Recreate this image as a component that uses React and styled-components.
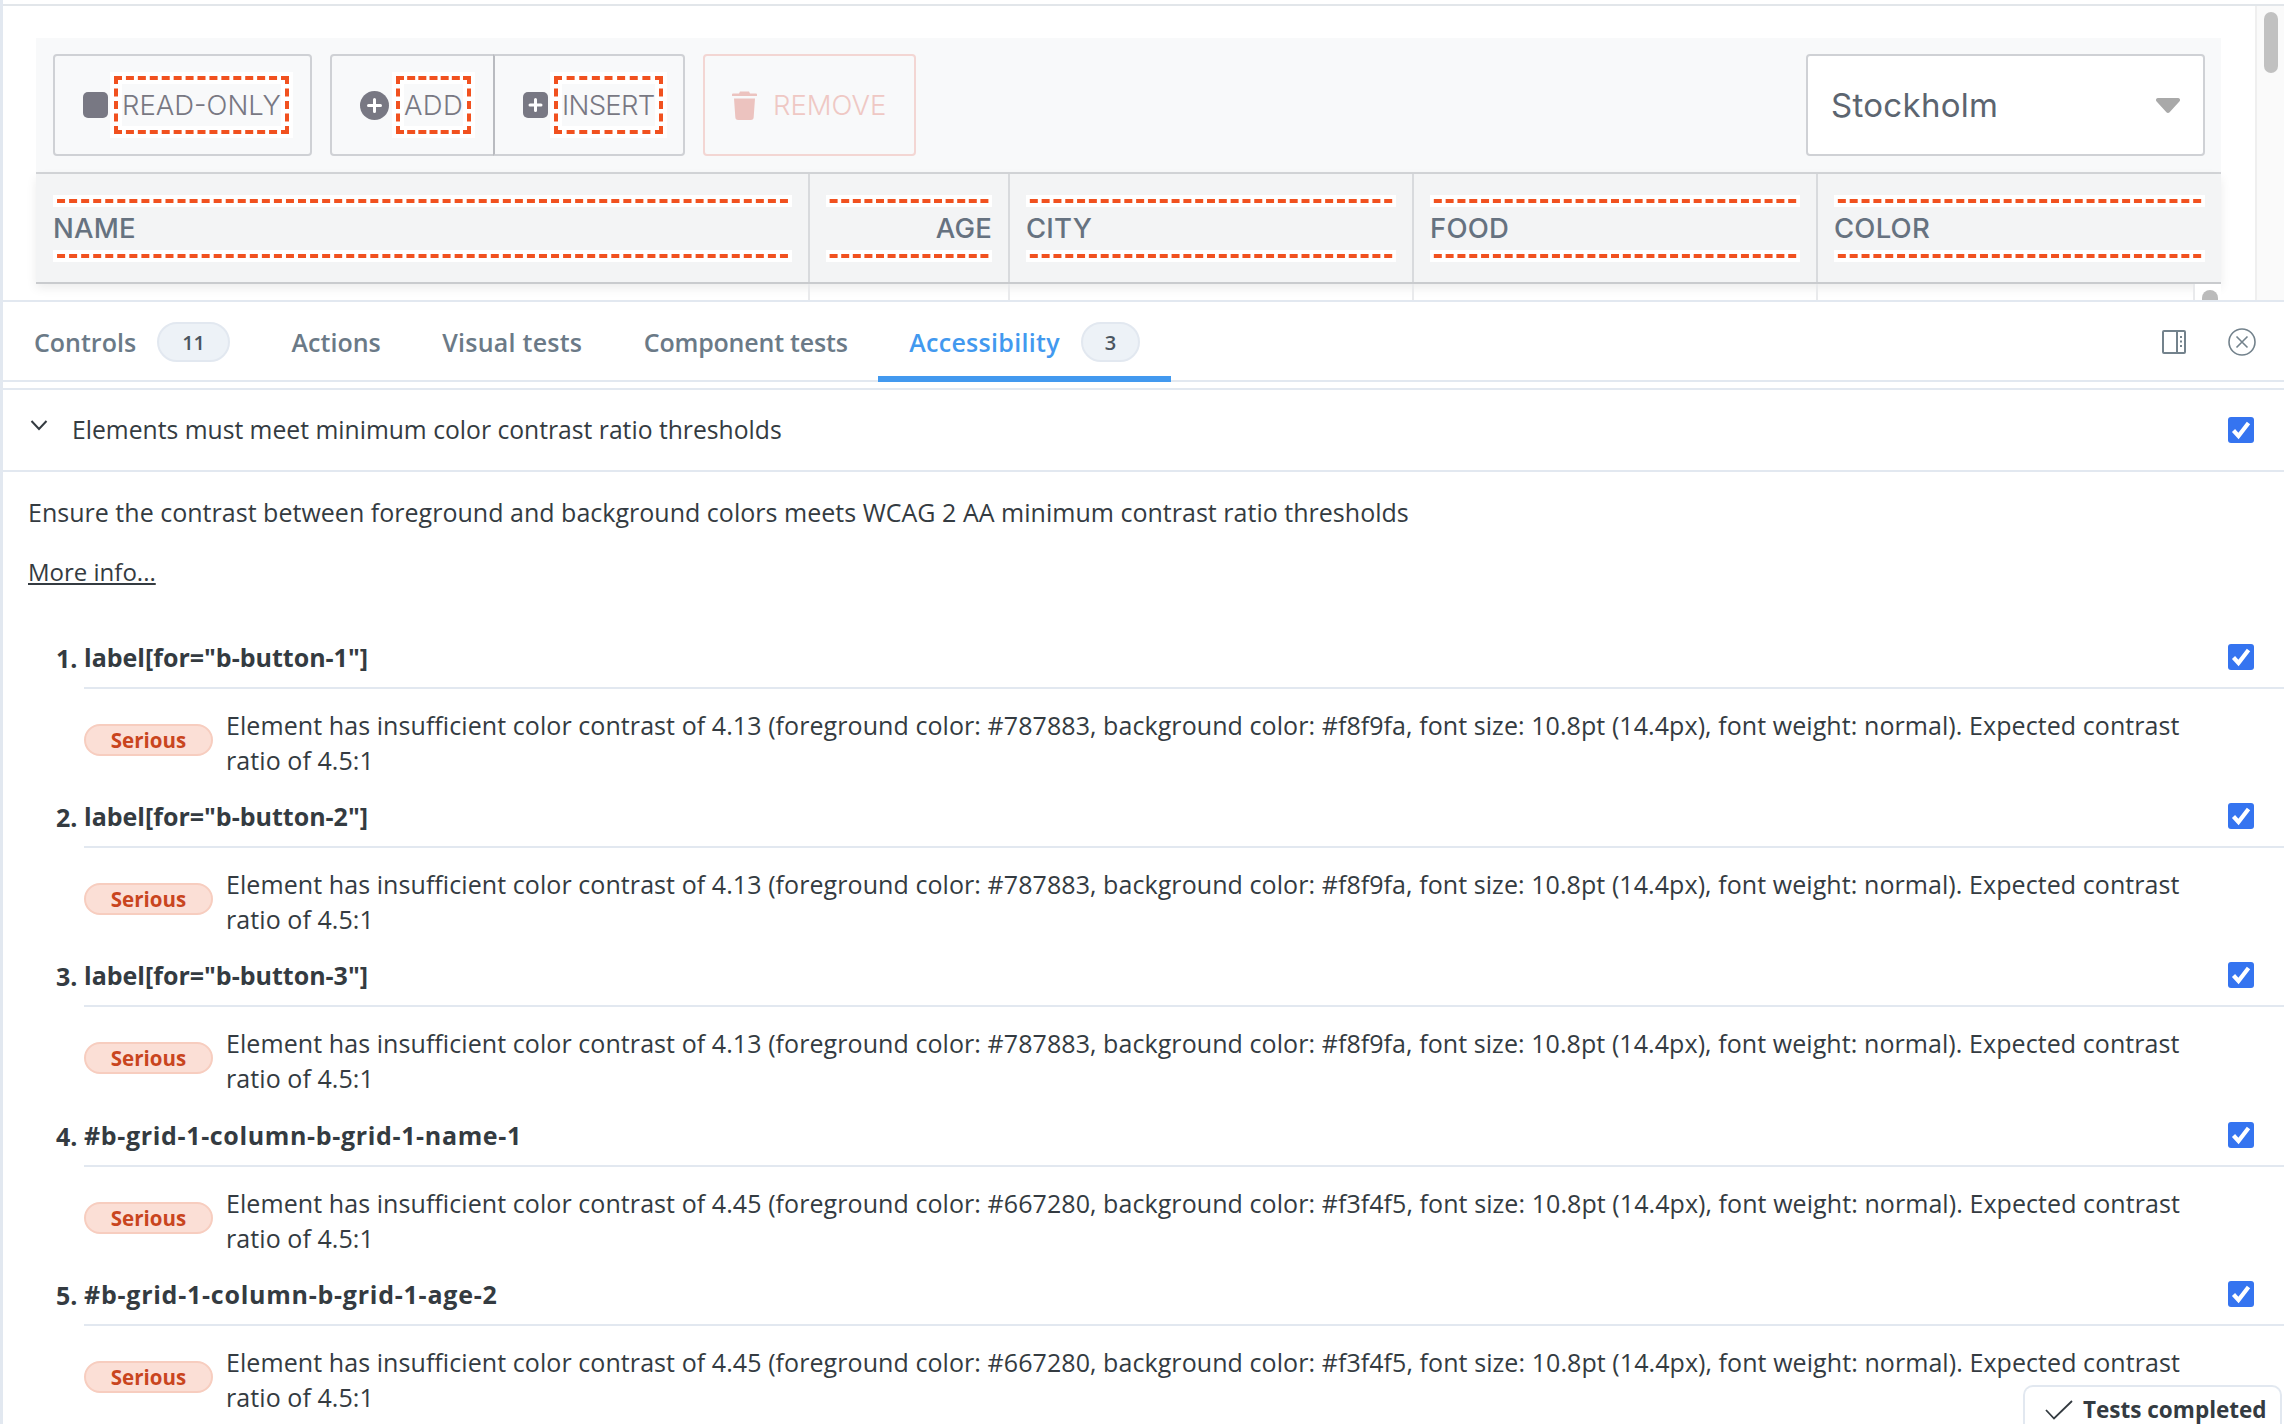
import React from 'react';
import styled, { createGlobalStyle } from 'styled-components';

const GlobalStyle = createGlobalStyle`
  html, body {
    margin: 0;
    padding: 0;
    background: #fff;
    overflow: hidden;
  }
  * {
    box-sizing: border-box;
  }
`;

const BODY_FONT = '"Open Sans", "Noto Sans", sans-serif';
const UI_FONT = 'Inter, "Open Sans", sans-serif';
const HIGHLIGHT = `
  outline: 4px dashed #f1511f;
  outline-offset: 4px;
  box-shadow: 0 0 0 12px #fff;
`;

const Frame = styled.div`
  position: relative;
  display: flex;
  flex-direction: column;
  width: 2284px;
  height: 1424px;
  padding-top: 4px;
  overflow: hidden;
  border-left: 3px solid #e2e8f0;
  font-family: ${BODY_FONT};
  color: #343b41;
`;

const Preview = styled.div`
  display: flex;
  flex: 0 0 296px;
  border-top: 2px solid #e2e6ea;
  overflow: hidden;
`;

const Canvas = styled.div`
  flex: 1;
  min-width: 0;
  padding: 32px 34px 0 33px;
`;

const PageScrollbar = styled.div`
  flex: 0 0 29px;
  padding: 6px 6px 0 7px;
  background: #fafafa;
  border-left: 2px solid #efefef;
`;

const PageThumb = styled.div`
  height: 61px;
  background: #c1c1c1;
  border-radius: 8px;
`;

const Toolbar = styled.div`
  display: flex;
  align-items: flex-start;
  gap: 18px;
  height: 136px;
  padding: 16px 16px 0 17px;
  background: #f8f9fa;
  border-bottom: 2px solid #d3d5d8;
`;

const ButtonGroup = styled.div`
  display: flex;
`;

const ToolButton = styled.div`
  display: flex;
  align-items: center;
  gap: ${(props) => props.gap || 14}px;
  width: ${(props) => props.width}px;
  height: 102px;
  padding-left: ${(props) => props.pad}px;
  margin-left: ${(props) => (props.joined ? '-2px' : '0')};
  border: 2px solid ${(props) => (props.danger ? '#f3d6d3' : '#cfd1d5')};
  border-left-color: ${(props) => {
    if (props.danger) return '#f3d6d3';
    return props.joined ? '#b9bbc0' : '#cfd1d5';
  }};
  border-radius: ${(props) => props.radius || '4px'};
  flex: none;
`;

const ButtonLabel = styled.span`
  display: block;
  height: 42px;
  font-family: ${UI_FONT};
  font-size: 27.5px;
  font-weight: 300;
  line-height: 42px;
  letter-spacing: ${(props) => props.spacing || 0}px;
  white-space: nowrap;
  color: ${(props) => (props.danger ? '#efc8c4' : '#787883')};
  ${(props) => !props.danger && HIGHLIGHT}
`;

const SquareIcon = styled.span`
  display: block;
  flex: none;
  width: 25px;
  height: 26px;
  background: #787883;
  border-radius: 5px;
`;

const IconSvg = styled.svg`
  display: block;
  flex: none;
`;

const CitySelect = styled.div`
  display: flex;
  align-items: center;
  justify-content: space-between;
  width: 399px;
  height: 102px;
  margin-left: auto;
  padding: 0 23px 0 23px;
  background: #fff;
  border: 2px solid #cfd1d5;
  border-radius: 4px;
  font-family: ${UI_FONT};
  font-size: 33px;
  font-weight: 400;
  letter-spacing: 0.3px;
  color: #5c6570;
`;

const GRID_COLUMNS = '772px 200px 404px 404px 405px';

const HeaderRow = styled.div`
  position: relative;
  display: grid;
  grid-template-columns: ${GRID_COLUMNS};
  height: 110px;
  background: #f3f4f5;
  border-bottom: 2px solid #c9cbce;
  box-shadow: 0 4px 10px rgba(0, 0, 0, 0.08);
`;

const HeaderCell = styled.div`
  display: flex;
  align-items: center;
  min-width: 0;
  padding: 1px 16px 0 ${(props) => (props.first ? '17px' : '16px')};
  border-left: ${(props) => (props.first ? 'none' : '2px solid #d8dadd')};
`;

// clips the sides of the highlight so only its top and bottom edges show
const HeaderClip = styled.div`
  flex: 1;
  overflow-x: clip;
  overflow-y: visible;
`;

const HeaderLabel = styled.div`
  height: 43px;
  font-family: ${UI_FONT};
  font-size: 27.5px;
  font-weight: 500;
  line-height: 43px;
  letter-spacing: 0.2px;
  color: #667280;
  text-align: ${(props) => (props.right ? 'right' : 'left')};
  ${HIGHLIGHT}
`;

const BodyRow = styled.div`
  position: relative;
  display: grid;
  grid-template-columns: ${GRID_COLUMNS};
  height: 18px;
`;

const BodyCell = styled.div`
  border-left: ${(props) => (props.first ? 'none' : '2px solid #e9eaec')};
`;

const InnerScrollbar = styled.div`
  position: absolute;
  top: 0;
  right: 0;
  bottom: 0;
  width: 28px;
  padding: 6px 0 0 7px;
  background: #fff;
  border-left: 2px solid #e9eaec;
`;

const InnerThumb = styled.div`
  width: 16px;
  height: 24px;
  background: #bbb;
  border-radius: 8px;
`;

const TabBar = styled.div`
  display: flex;
  flex: 0 0 82px;
  padding-left: 0.25px;
  background: #fff;
  border-top: 2px solid #e2e8f0;
  border-bottom: 2px solid #e2e8f0;
`;

const Tab = styled.div`
  display: flex;
  align-items: center;
  gap: 21px;
  height: 80px;
  margin-bottom: -2px;
  padding: 6px 30.75px 0;
  border-bottom: 6px solid ${(props) => (props.active ? '#4299ef' : 'transparent')};
  font-size: 25px;
  font-weight: 600;
  letter-spacing: ${(props) => props.spacing || 0}px;
  color: ${(props) => (props.active ? '#4299ef' : '#6b7a87')};
`;

const TabBadge = styled.span`
  display: flex;
  align-items: center;
  justify-content: center;
  min-width: ${(props) => props.width}px;
  height: 40px;
  background: #edf2f7;
  border: 2px solid #e2e8f0;
  border-radius: 20px;
  font-size: 20px;
  font-weight: 600;
  letter-spacing: 0;
  color: #4a5560;
`;

const TabActions = styled.div`
  display: flex;
  align-items: center;
  gap: 42px;
  margin-left: auto;
  padding: 2px 28px 0 0;
`;

const Findings = styled.div`
  flex: 1;
  margin-top: 6px;
  border-top: 2px solid #e2e8f0;
`;

const RuleHeader = styled.div`
  display: flex;
  align-items: center;
  height: 82px;
  padding: 0 30px 0 27px;
  border-bottom: 2px solid #e2e8f0;
  font-size: 24.7px;
`;

const RuleTitle = styled.span`
  flex: 1;
  margin-bottom: 2px;
`;

const Chevron = styled.svg`
  flex: none;
  width: 18px;
  height: 12px;
  margin: -10px 24px 0 0;
`;

const Description = styled.p`
  margin: 23px 0 0 25px;
  font-size: 25px;
  line-height: 35px;
  letter-spacing: 0.02px;
`;

const MoreInfo = styled.a`
  display: block;
  margin: 24px 0 36px 25px;
  font-size: 24px;
  line-height: 35px;
  color: inherit;
  text-decoration: underline;
`;

const Finding = styled.div`
  display: grid;
  grid-template-columns: 81px 1fr;
  align-content: start;
  height: 159.2px;
`;

const FindingNumber = styled.div`
  height: 64px;
  padding-left: 53px;
  font-size: 25px;
  font-weight: 700;
  line-height: 66px;
`;

const FindingTitle = styled.div`
  display: flex;
  align-items: center;
  justify-content: space-between;
  height: 64px;
  padding: 2px 30px 0 0;
  border-bottom: 2px solid #e2e8f0;
  font-size: 25px;
  font-weight: 700;
  letter-spacing: ${(props) => props.spacing || 0}px;
`;

const FindingBody = styled.div`
  grid-column: 2;
  display: flex;
  align-items: flex-start;
  gap: 13px;
  padding-top: 19px;
`;

const Severity = styled.span`
  display: flex;
  align-items: center;
  justify-content: center;
  flex: none;
  width: 129px;
  height: 32px;
  margin-top: 16px;
  background: #fbdfd6;
  border: 2px solid #f7cdbf;
  border-radius: 16px;
  font-size: 20.5px;
  font-weight: 700;
  color: #c9451e;
`;

const FindingText = styled.div`
  width: 1990px;
  font-size: 25px;
  line-height: 35px;
  letter-spacing: 0.075px;
`;

const CheckBox = styled.span`
  display: flex;
  align-items: center;
  justify-content: center;
  flex: none;
  width: 26px;
  height: 26px;
  background: #3574f0;
  border-radius: 3px;
`;

const Toast = styled.div`
  position: absolute;
  right: 2px;
  bottom: 0;
  display: flex;
  align-items: center;
  gap: 10px;
  width: 259px;
  height: 39px;
  padding: 8px 0 0 20px;
  background: #fff;
  border: 2px solid #e2e8f0;
  border-bottom: none;
  border-radius: 10px 10px 0 0;
  font-size: 22.5px;
  font-weight: 700;
  white-space: nowrap;
`;

const CircleAdd = () => (
  <IconSvg width="29" height="29" viewBox="0 0 29 29">
    <circle cx="14.5" cy="14.5" r="14.5" fill="#787883" />
    <path d="M14.5 8.5v12M8.5 14.5h12" stroke="#fff" strokeWidth="3" strokeLinecap="round" />
  </IconSvg>
);

const BoxAdd = () => (
  <IconSvg width="25" height="26" viewBox="0 0 25 26">
    <rect width="25" height="26" rx="5" fill="#787883" />
    <path d="M12.5 7.5v11M7 13h11" stroke="#fff" strokeWidth="3" strokeLinecap="round" />
  </IconSvg>
);

const Trash = () => (
  <IconSvg width="25" height="30" viewBox="0 0 25 30">
    <path d="M8 1.5h9l1 2h6a1 1 0 0 1 1 1v1.500H0V4.500a1 1 0 0 1 1-1h6z" fill="#ecc3bf" />
    <path d="M2 8.500h21l-1.300 18.500a3 3 0 0 1-3 3H6.300a3 3 0 0 1-3-3z" fill="#ecc3bf" />
  </IconSvg>
);

const Caret = () => (
  <IconSvg width="24" height="15" viewBox="0 0 24 15">
    <path d="M2 0h20a2 2 0 0 1 1.600 3.200l-10 11a2 2 0 0 1-3.200 0l-10-11A2 2 0 0 1 2 0z" fill="#a9a9a9" />
  </IconSvg>
);

const PanelIcon = () => (
  <IconSvg width="24" height="24" viewBox="0 0 24 24" fill="none">
    <rect x="1" y="1" width="22" height="22" rx="1" stroke="#73828c" strokeWidth="2" />
    <path d="M15 1v22" stroke="#73828c" strokeWidth="2" />
    <path d="M19 6v2M19 10.500v2M19 15v2" stroke="#73828c" strokeWidth="2" />
  </IconSvg>
);

const CloseIcon = () => (
  <IconSvg width="28" height="28" viewBox="0 0 28 28" fill="none">
    <circle cx="14" cy="14" r="13" stroke="#73828c" strokeWidth="1.600" />
    <path d="M8.500 8.500l11 11M19.500 8.500l-11 11" stroke="#73828c" strokeWidth="1.600" />
  </IconSvg>
);

const CheckMark = () => (
  <CheckBox>
    <IconSvg width="20" height="20" viewBox="0 0 20 20" fill="none">
      <path d="M2.500 10.500l5 5.500L17.500 3" stroke="#fff" strokeWidth="4.200" />
    </IconSvg>
  </CheckBox>
);

const headers = [
  { name: 'NAME', first: true },
  { name: 'AGE', right: true },
  { name: 'CITY' },
  { name: 'FOOD' },
  { name: 'COLOR' },
];

const tabs = [
  { name: 'Controls', badge: '11', badgeWidth: 73 },
  { name: 'Actions' },
  { name: 'Visual tests', spacing: 0.25 },
  { name: 'Component tests', spacing: -0.2 },
  { name: 'Accessibility', badge: '3', badgeWidth: 59, active: true, spacing: 0.3 },
];

const MESSAGE_A =
  'Element has insufficient color contrast of 4.13 (foreground color: #787883, background color: #f8f9fa, font size: 10.8pt (14.4px), font weight: normal). Expected contrast ratio of 4.5:1';
const MESSAGE_B =
  'Element has insufficient color contrast of 4.45 (foreground color: #667280, background color: #f3f4f5, font size: 10.8pt (14.4px), font weight: normal). Expected contrast ratio of 4.5:1';

const findings = [
  { target: 'label[for="b-button-1"]', text: MESSAGE_A },
  { target: 'label[for="b-button-2"]', text: MESSAGE_A },
  { target: 'label[for="b-button-3"]', text: MESSAGE_A },
  { target: '#b-grid-1-column-b-grid-1-name-1', text: MESSAGE_B, spacing: 0.65 },
  { target: '#b-grid-1-column-b-grid-1-age-2', text: MESSAGE_B, spacing: 0.75 },
];

const App = () => (
  <Frame>
    <GlobalStyle />
    <Preview>
      <Canvas>
        <Toolbar>
          <ToolButton width={259} pad={28}>
            <SquareIcon />
            <ButtonLabel>READ-ONLY</ButtonLabel>
          </ToolButton>
          <ButtonGroup>
            <ToolButton width={165} pad={28} gap={15} radius="4px 0 0 4px">
              <CircleAdd />
              <ButtonLabel spacing={0.3}>ADD</ButtonLabel>
            </ToolButton>
            <ToolButton width={192} pad={28} joined radius="0 4px 4px 0">
              <BoxAdd />
              <ButtonLabel spacing={-0.7}>INSERT</ButtonLabel>
            </ToolButton>
          </ButtonGroup>
          <ToolButton width={213} pad={27} gap={16} danger>
            <Trash />
            <ButtonLabel danger>REMOVE</ButtonLabel>
          </ToolButton>
          <CitySelect>
            Stockholm
            <Caret />
          </CitySelect>
        </Toolbar>
        <HeaderRow>
          {headers.map((header) => (
            <HeaderCell key={header.name} first={header.first}>
              <HeaderClip>
                <HeaderLabel right={header.right}>{header.name}</HeaderLabel>
              </HeaderClip>
            </HeaderCell>
          ))}
        </HeaderRow>
        <BodyRow>
          {headers.map((header) => (
            <BodyCell key={header.name} first={header.first} />
          ))}
          <InnerScrollbar>
            <InnerThumb />
          </InnerScrollbar>
        </BodyRow>
      </Canvas>
      <PageScrollbar>
        <PageThumb />
      </PageScrollbar>
    </Preview>
    <TabBar>
      {tabs.map((tab) => (
        <Tab key={tab.name} active={tab.active} spacing={tab.spacing}>
          {tab.name}
          {tab.badge && <TabBadge width={tab.badgeWidth}>{tab.badge}</TabBadge>}
        </Tab>
      ))}
      <TabActions>
        <PanelIcon />
        <CloseIcon />
      </TabActions>
    </TabBar>
    <Findings>
      <RuleHeader>
        <Chevron viewBox="0 0 18 12" fill="none">
          <path d="M1.500 2l7.500 8 7.500-8" stroke="#343b41" strokeWidth="2" />
        </Chevron>
        <RuleTitle>Elements must meet minimum color contrast ratio thresholds</RuleTitle>
        <CheckMark />
      </RuleHeader>
      <Description>
        Ensure the contrast between foreground and background colors meets WCAG 2 AA minimum contrast ratio thresholds
      </Description>
      <MoreInfo>More info...</MoreInfo>
      {findings.map((finding, index) => (
        <Finding key={finding.target}>
          <FindingNumber>{index + 1}.</FindingNumber>
          <FindingTitle spacing={finding.spacing}>
            {finding.target}
            <CheckMark />
          </FindingTitle>
          <FindingBody>
            <Severity>Serious</Severity>
            <FindingText>{finding.text}</FindingText>
          </FindingBody>
        </Finding>
      ))}
    </Findings>
    <Toast>
      <IconSvg width="28" height="20" viewBox="0 0 28 20" fill="none">
        <path d="M1 10l8 8.500L27 1" stroke="#343b41" strokeWidth="1.800" />
      </IconSvg>
      Tests completed
    </Toast>
  </Frame>
);

export default App;
